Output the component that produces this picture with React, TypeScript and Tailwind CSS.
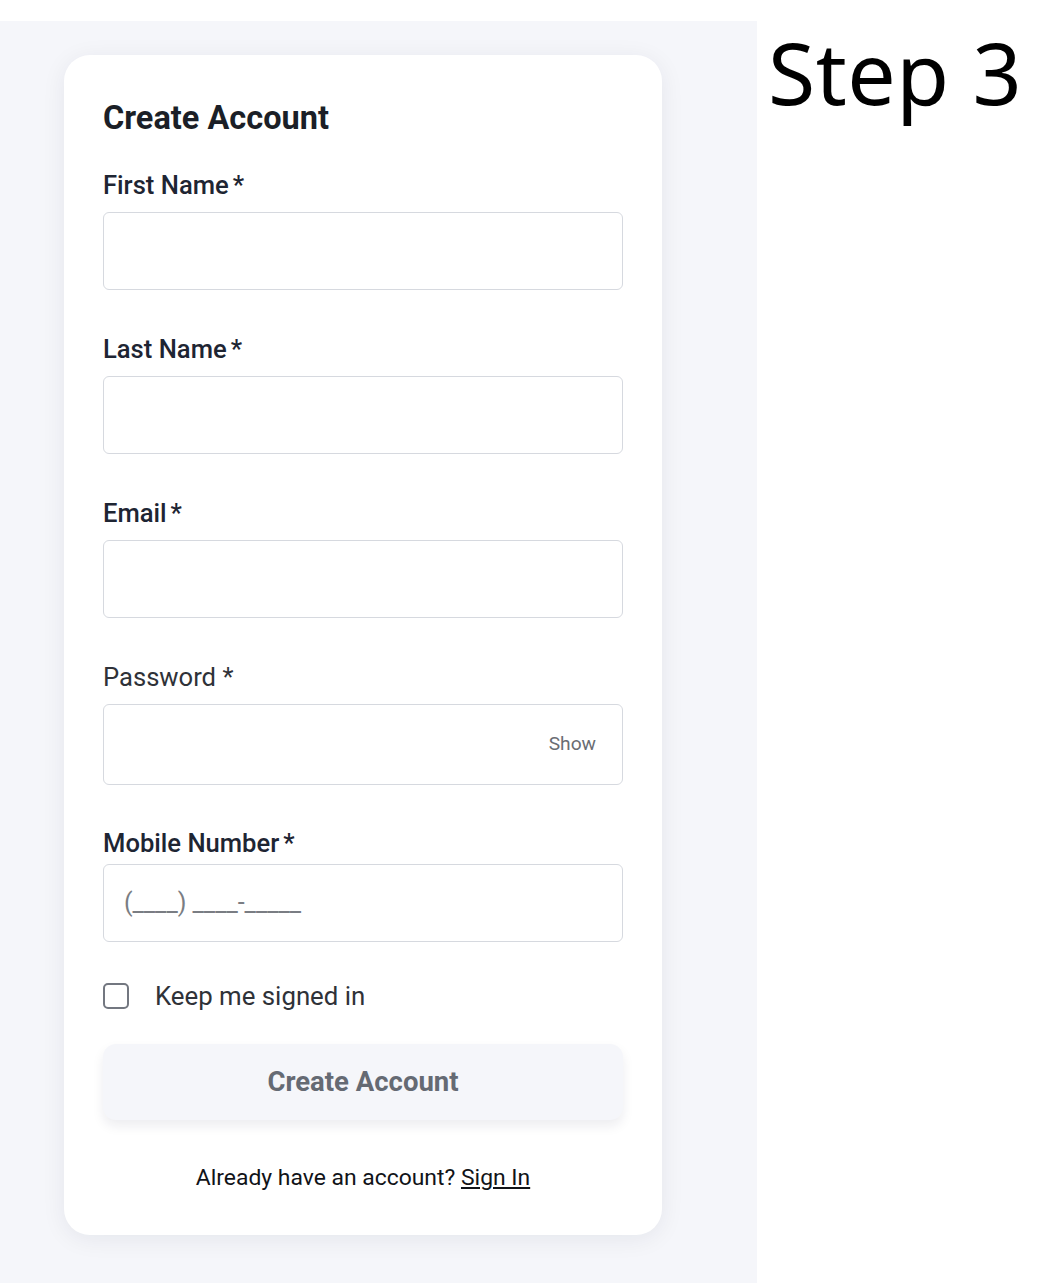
// Create Account – step 3

const font = { fontFamily: "Roboto, 'Liberation Sans', sans-serif" };

interface FieldProps {
  label: string;
  strong?: boolean;
  first?: boolean;
  space?: string;
  gap?: string;
  children?: React.ReactNode;
}

const Field: React.FC<FieldProps> = ({ label, strong = true, first, space = "mt-[44px]", gap = "mb-3", children }) => (
  <div className={first ? "mt-[33px]" : space}>
    <label
      className={`block text-[25.6px] leading-[30px] ${gap} ${
        strong ? "font-medium text-[#1e2533]" : "font-normal text-[#2f3238]"
      }`}
    >
      {label}
      {strong ? <span className="ml-[4px]">*</span> : <span> *</span>}
    </label>
    {children}
  </div>
);

const boxCls =
  "flex h-[78px] w-full items-center rounded-[6px] border-[1.6px] border-[#d6d9df] bg-white";

export default function App() {
  return (
    <div className="flex h-[1283px] w-[1050px] bg-white" style={font}>
      <div className="mt-[21px] w-[757px] bg-[#f5f6fa] pl-[64px] pt-[34px]">
        <div className="w-[598px] rounded-[26px] bg-white px-[39px] pb-[44px] pt-[44px] shadow-[0_4px_24px_rgba(20,30,60,0.07)]">
          <h1 className="text-[32.5px] font-bold leading-[38px] text-[#1b1f27]">Create Account</h1>

          <Field label="First Name" first>
            <div className={boxCls} />
          </Field>
          <Field label="Last Name">
            <div className={boxCls} />
          </Field>
          <Field label="Email">
            <div className={boxCls} />
          </Field>
          <Field label="Password" strong={false} gap="mb-[12px]">
            <div className={`${boxCls} h-[81px] justify-end pr-[26px]`}>
              <span className="text-[19.2px] text-[#6a6d73]">Show</span>
            </div>
          </Field>
          <Field label="Mobile Number" space="mt-[43px]" gap="mb-[6px]">
            <div className={`${boxCls} pl-[20px]`}>
              <span className="text-[25px] text-[#7a7d83]">(____) ____-_____</span>
            </div>
          </Field>

          <div className="mt-[39px] flex h-[30px] items-center">
            <span className="h-[26px] w-[26px] rounded-[5px] border-[2px] border-[#737780] bg-white" />
            <span className="ml-[26px] text-[25.8px] text-[#2f3238]">Keep me signed in</span>
          </div>

          <button className="mt-[33px] flex h-[76px] w-full items-center justify-center rounded-[13px] bg-[#f5f6fa] text-[27.5px] font-bold text-[#656a73] shadow-[0_6px_12px_rgba(20,30,60,0.08)]">
            Create Account
          </button>

          <p className="mt-[45px] text-center text-[22.9px] leading-[26px] text-[#111318]">
            Already have an account? <span className="underline underline-offset-2">Sign In</span>
          </p>
        </div>
      </div>
      <div
        className="pl-[11px] pt-[17px] text-[86px] font-normal leading-[110px] tracking-[0.5px] text-black"
        style={{ fontFamily: "'Noto Sans', 'Open Sans', sans-serif" }}
      >
        Step 3
      </div>
    </div>
  );
}
